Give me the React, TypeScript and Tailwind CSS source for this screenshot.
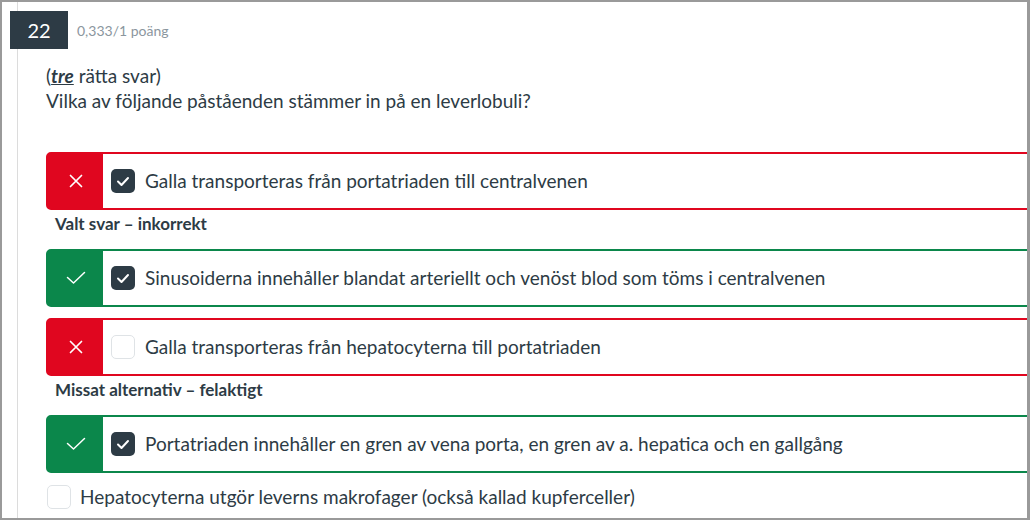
type Kind = "wrong" | "right";

function XIcon() {
  return (
    <svg width="14" height="14" viewBox="0 0 14 14" fill="none">
      <path d="M1.5 1.5 L12.5 12.5 M12.5 1.5 L1.5 12.5" stroke="white" strokeWidth="1.7" strokeLinecap="round" />
    </svg>
  );
}

function CheckIcon() {
  return (
    <svg width="20" height="14" viewBox="0 0 20 14" fill="none">
      <path d="M1.5 6.5 L7.5 12 L18.5 1.5" stroke="white" strokeWidth="1.5" strokeLinecap="round" strokeLinejoin="round" />
    </svg>
  );
}

function Box({ checked }: { checked: boolean }) {
  if (!checked) {
    return <div className="w-[24px] h-[24px] shrink-0 rounded-[5px] border border-[#dfe3e6] bg-white" />;
  }
  return (
    <div className="w-[24px] h-[24px] shrink-0 rounded-[5px] bg-[#2d3b45] flex items-center justify-center">
      <svg width="14" height="11" viewBox="0 0 14 11" fill="none">
        <path d="M2 5.5 L5.5 9 L12 2" stroke="white" strokeWidth="2" strokeLinecap="round" strokeLinejoin="round" />
      </svg>
    </div>
  );
}

function Answer({ kind, checked, text, label }: { kind: Kind; checked: boolean; text: string; label?: string }) {
  const wrong = kind === "wrong";
  return (
    <div className="mb-[11px]">
      <div
        className={
          wrong
            ? "h-[58px] mr-[-20px] flex items-center border-2 border-[#e0061f] rounded-l-[5px]"
            : "h-[58px] mr-[-20px] flex items-center border-2 border-[#0b874b] rounded-l-[5px]"
        }
      >
        <div
          className={
            wrong
              ? "w-[55px] h-full bg-[#e0061f] flex items-center justify-center"
              : "w-[55px] h-full bg-[#0b874b] flex items-center justify-center"
          }
        >
          {wrong ? <XIcon /> : <CheckIcon />}
        </div>
        <div className="ml-[8px]">
          <Box checked={checked} />
        </div>
        <span className="ml-[10px] text-[19px] text-[#2d3b45] whitespace-nowrap">{text}</span>
      </div>
      {label && (
        <div className="h-[28px] flex items-center pl-[9px] text-[17px] font-bold text-[#2d3b45]">{label}</div>
      )}
    </div>
  );
}

export default function App() {
  return (
    <div
      className="w-[1030px] h-[520px] bg-white border-2 border-r-[3px] border-[#9a9a9a] overflow-hidden"
      style={{ fontFamily: "Lato, 'Open Sans', sans-serif" }}
    >
      <div className="ml-[15px] h-full border-l border-[#dcdcdc]">
        {/* Header */}
        <div className="flex items-center pt-[9px] -ml-[8px]">
          <div className="w-[58px] h-[38px] bg-[#2d3b45] text-white text-[20px] flex items-center justify-center">
            22
          </div>
          <span className="ml-[9px] text-[14px] text-[#8b969e]">0,333/1 poäng</span>
        </div>

        <div className="pl-[28px]">
          {/* Question */}
          <div className="mt-[14px] text-[19px] leading-[25px] text-[#2d3b45]">
            <div>
              (<em className="font-bold underline">tre</em> rätta svar)
            </div>
            <div>Vilka av följande påståenden stämmer in på en leverlobuli?</div>
          </div>

          {/* Answers */}
          <div className="mt-[39px]">
            <Answer
              kind="wrong"
              checked
              text="Galla transporteras från portatriaden till centralvenen"
              label="Valt svar – inkorrekt"
            />
            <Answer
              kind="right"
              checked
              text="Sinusoiderna innehåller blandat arteriellt och venöst blod som töms i centralvenen"
            />
            <Answer
              kind="wrong"
              checked={false}
              text="Galla transporteras från hepatocyterna till portatriaden"
              label="Missat alternativ – felaktigt"
            />
            <Answer
              kind="right"
              checked
              text="Portatriaden innehåller en gren av vena porta, en gren av a. hepatica och en gallgång"
            />
            <div className="flex items-center -mt-[1px] pl-[1px]">
              <Box checked={false} />
              <span className="ml-[9px] text-[19px] text-[#2d3b45]">
                Hepatocyterna utgör leverns makrofager (också kallad kupferceller)
              </span>
            </div>
          </div>
        </div>
      </div>
    </div>
  );
}
